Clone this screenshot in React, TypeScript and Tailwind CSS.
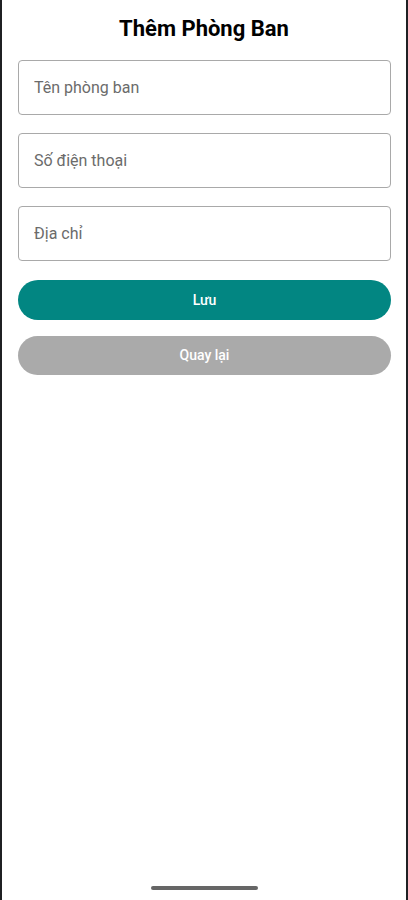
import React, { useState } from "react";

export default function App() {
  const [name, setName] = useState("");
  const [phone, setPhone] = useState("");
  const [address, setAddress] = useState("");

  const inputClass =
    "w-full h-[55px] border border-[#a9a9a9] rounded-[4px] pl-[15px] pr-4 text-[16px] text-[#222] bg-white placeholder-[#6b6b6b] focus:outline-none";

  return (
    <div
      className="h-[900px] w-full bg-[#1f2023] flex"
      style={{ fontFamily: "Roboto, 'Noto Sans', sans-serif" }}
    >
      <div className="flex-1 mx-[2px] bg-white flex flex-col">
        <h1 className="pt-[16px] text-center text-[22px] leading-[26px] font-bold text-black">
          Thêm Phòng Ban
        </h1>

        <div className="mt-[18px] pl-4 pr-[15px] flex flex-col gap-[18px]">
          <input
            type="text"
            placeholder="Tên phòng ban"
            value={name}
            onChange={(e) => setName(e.target.value)}
            className={inputClass}
          />
          <input
            type="tel"
            placeholder="Số điện thoại"
            value={phone}
            onChange={(e) => setPhone(e.target.value)}
            className={inputClass}
          />
          <input
            type="text"
            placeholder="Địa chỉ"
            value={address}
            onChange={(e) => setAddress(e.target.value)}
            className={inputClass}
          />
        </div>

        <div className="mt-[19px] pl-4 pr-[15px] flex flex-col gap-4">
          <button className="w-full h-[40px] rounded-full bg-[#028682] text-white text-[14px] font-medium">
            Lưu
          </button>
          <button className="w-full h-[39px] rounded-full bg-[#aaaaaa] text-white text-[14px] font-medium">
            Quay lại
          </button>
        </div>

        <div className="mt-auto mb-[10px] flex justify-center">
          <div className="w-[107px] h-[4px] rounded-full bg-[#666666]" />
        </div>
      </div>
    </div>
  );
}
